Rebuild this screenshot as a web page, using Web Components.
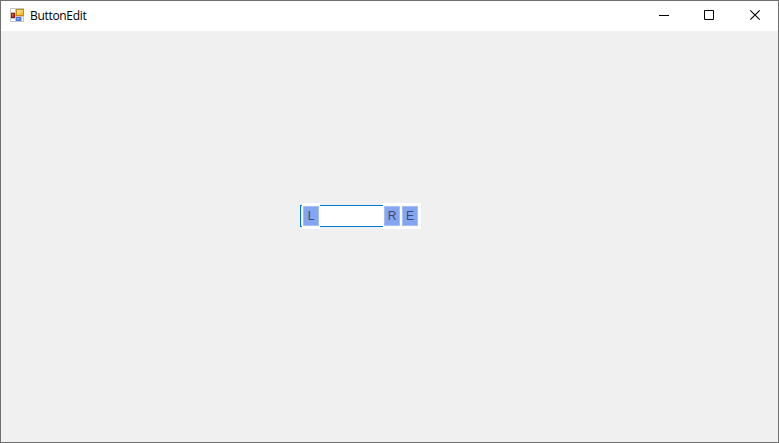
<!DOCTYPE html>
<html lang="en"><head><meta charset="utf-8"><title>ButtonEdit</title>
<style>html,body{margin:0;height:100%;overflow:hidden}</style></head>
<body>
<app-window><title-bar slot="title">ButtonEdit</title-bar>
<button-edit><edit-button slot="left">L</edit-button><edit-button slot="right">R</edit-button><edit-button slot="right">E</edit-button></button-edit></app-window>
<script>
const define=(name,html)=>customElements.define(name,class extends HTMLElement{
  constructor(){super();this.attachShadow({mode:'open'}).innerHTML=html;}
});
define('app-window',`<style>
:host{display:flex;flex-direction:column;box-sizing:border-box;width:779px;height:443px;border:1px solid #707070;background:#f0f0f0;font:12px/16px "Open Sans","Noto Sans",sans-serif;color:#000}
main{flex:1;display:flex;align-items:flex-start;padding:172px 0 0 299px}
</style><slot name="title"></slot><main><slot></slot></main>`);
define('title-bar',`<style>
:host{display:flex;height:30px;background:#fff;align-items:center;padding-left:9px}
form-icon{margin-bottom:2px}
.title{margin-left:6px;flex:1;letter-spacing:-.32px;white-space:nowrap}
</style><form-icon></form-icon><span class="title"><slot></slot></span><window-controls></window-controls>`);
define('form-icon',`<style>:host,svg{display:block;width:14px;height:14px}</style>
<svg viewBox="0 0 14 14" shape-rendering="crispEdges">
<defs><linearGradient id="y" x2="1" y2="1"><stop stop-color="#fff0a0"/><stop offset="1" stop-color="#f0ad16"/></linearGradient><linearGradient id="b" x2="1" y2="1"><stop stop-color="#9ac2ff"/><stop offset="1" stop-color="#3f78e0"/></linearGradient><linearGradient id="r" x2="1" y2="1"><stop stop-color="#ef7860"/><stop offset="1" stop-color="#b01008"/></linearGradient></defs>
<path fill="#c6c6c6" d="M0 0h14v14H0z"/><path fill="#fff" d="M1 1h4v3H1zM1 11h4v2H1zM12 9h1v4h-1z"/>
<path fill="#9c1710" d="M1 5h4v5H1z"/><path fill="url(#r)" d="M2 6h2v3H2z"/>
<path fill="#c78c10" d="M6 1h8v7H6z"/><path fill="url(#y)" d="M7 2h6v5H7z"/>
<path fill="#4779cf" d="M6 9h5v4H6z"/><path fill="url(#b)" d="M7 10h3v2H7z"/></svg>`);
define('window-controls',`<style>:host{display:flex}svg{display:block;width:46px;height:30px}svg:nth-of-type(2){width:45px}</style>
<svg viewBox="0 0 46 30"><path d="M18 14h10v1H18z"/></svg>
<svg viewBox="0 0 45 30"><path fill="none" stroke="#000" d="M17.500 9.500h9v9h-9z"/></svg>
<svg viewBox="0 0 46 30"><path fill="none" stroke="#000" stroke-width="1.100" d="M18.300 9.300l9.400 9.400M27.700 9.300l-9.400 9.400"/></svg>`);
define('button-edit',`<style>
:host{display:flex;align-items:center;width:121px;height:26px}
.edge{width:2px;height:22px;box-sizing:border-box;border:1px solid #0078d7;border-right:0;background:#fff}
.input{flex:1;height:22px;box-sizing:border-box;border:solid #0078d7;border-width:1px 0;background:#fff}
.panel{display:flex;align-items:center;gap:2px;height:26px;box-sizing:border-box;background:#fff;padding:0 1px}
.right{padding-right:3px}
</style><div class="edge"></div><div class="panel"><slot name="left"></slot></div><div class="input"></div><div class="panel right"><slot name="right"></slot></div>`);
define('edit-button',`<style>
:host{display:flex;align-items:center;justify-content:center;box-sizing:border-box;width:16px;height:20px;border:1px solid #a5bcf5;background:#84a5f0;color:#3c4a6b;font:12px/16px "Liberation Sans",Arial,sans-serif}
</style><slot></slot>`);
</script></body></html>
